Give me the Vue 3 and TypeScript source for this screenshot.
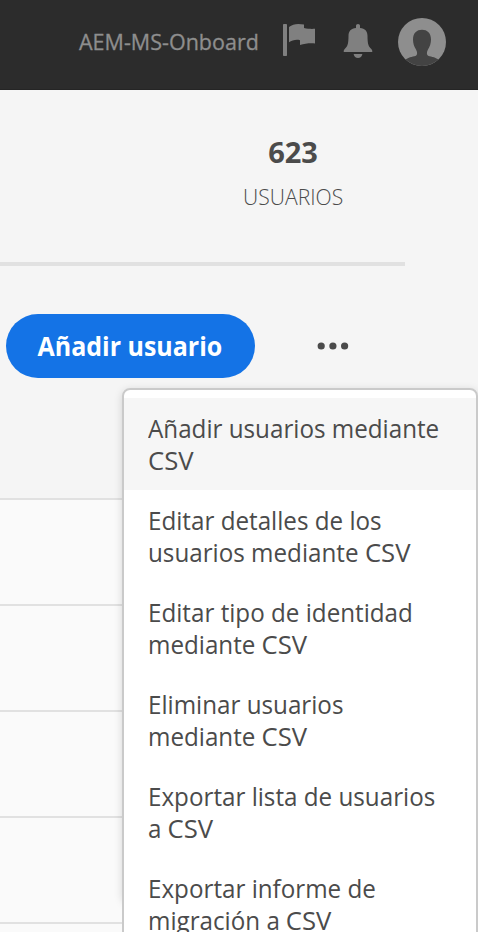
<script setup lang="ts">
interface MenuItem {
  id: string
  lines: { text: string; csv?: boolean }[]
}

const organization = 'AEM-MS-Onboard'
const userCount = 623

const menuItems: MenuItem[] = [
  { id: 'add', lines: [{ text: 'Añadir usuarios mediante' }, { text: '', csv: true }] },
  { id: 'edit', lines: [{ text: 'Editar detalles de los' }, { text: 'usuarios mediante ', csv: true }] },
  { id: 'identity', lines: [{ text: 'Editar tipo de identidad' }, { text: 'mediante ', csv: true }] },
  { id: 'remove', lines: [{ text: 'Eliminar usuarios' }, { text: 'mediante ', csv: true }] },
  { id: 'export', lines: [{ text: 'Exportar lista de usuarios' }, { text: 'a ', csv: true }] },
  { id: 'migration', lines: [{ text: 'Exportar informe de' }, { text: 'migración a ', csv: true }] },
]
</script>

<template>
  <div class="page">
    <header class="topbar">
      <span class="org"><span class="org-name">{{ organization }}</span></span>
      <svg class="flag" width="34" height="34" viewBox="0 0 34 34" aria-hidden="true">
        <rect x="1" y="1" width="4" height="32" rx="0.8" />
        <path d="M7 4C11 .8 16 .2 22 1.6V5C26 6 30 6 33 5.8V20.5C28 20 23 20.5 18 22V17.2C14 16 10 17.5 7 19.2Z" />
      </svg>
      <svg class="bell" width="30" height="36" viewBox="0 0 30 36" aria-hidden="true">
        <path d="M13 5V2.5Q13 1 15 1T17 2.5V5C22 5.6 24.5 8 24.5 13C24.5 21 25.5 23.5 28.3 26Q29.5 27.2 29.3 29H.7Q.5 27.2 1.7 26C4.5 23.5 5.5 21 5.5 13C5.5 8 8 5.6 13 5Z" />
        <path d="M10.6 31H19.4Q18.5 35 15 35T10.6 31Z" />
      </svg>
      <svg class="avatar" width="48" height="48" viewBox="0 0 48 48" aria-hidden="true">
        <circle cx="24" cy="24" r="24" fill="#8e8e8e" />
        <path d="M7.6 41.5C11 38.6 16.5 38.6 18.2 37.4C19.8 36.1 19 33.5 18 31.5C16.2 28.5 15 25.5 15 21.5C15 15 18.7 11.7 24 11.7S33 15 33 21.5C33 25.5 31.8 28.5 30 31.5C29 33.5 28.2 36.1 29.8 37.4C31.5 38.6 37 38.6 40.4 41.5A24 24 0 0 1 7.6 41.5Z" fill="#434343" />
      </svg>
    </header>

    <section class="summary">
      <div class="stat">
        <strong class="count">{{ userCount }}</strong>
        <span class="label">USUARIOS</span>
      </div>
    </section>

    <div class="toolbar">
      <button class="primary" type="button"><span class="primary-label">Añadir usuario</span></button>
      <button class="more" type="button" aria-haspopup="menu">
        <svg width="32" height="8" viewBox="0 0 32 8" aria-hidden="true">
          <circle cx="4.2" cy="4" r="3.6" />
          <circle cx="15.9" cy="4" r="3.6" />
          <circle cx="27.6" cy="4" r="3.6" />
        </svg>
      </button>
    </div>

    <div class="table">
      <div v-for="n in 5" :key="n" class="row"></div>
    </div>

    <div class="popover">
      <ul class="menu" role="menu">
        <li v-for="(item, index) in menuItems" :key="item.id" class="item" :class="{ active: index === 0 }" role="menuitem">
          <span v-for="line in item.lines" :key="line.text" class="line">{{ line.text }}<span v-if="line.csv" class="csv">CSV</span></span>
        </li>
      </ul>
    </div>
  </div>
</template>

<style>
body {
  margin: 0;
  overflow: hidden;
}
</style>

<style scoped>
.page {
  position: relative;
  height: 932px;
  overflow: hidden;
  background: #f5f5f5;
  color: #4b4b4b;
  font-family: "Open Sans", "Noto Sans", sans-serif;
}
.topbar {
  display: flex;
  align-items: center;
  box-sizing: border-box;
  height: 90px;
  padding: 0 32px 5px 79px;
  background: #2c2c2c;
  border-bottom: 1px solid #252525;
  color: #8e8e8e;
  fill: #808080;
}
.org {
  flex: none;
  width: 203px;
  margin-top: -2px;
  font-size: 22px;
  line-height: 32px;
  white-space: nowrap;
}
.org-name {
  display: inline-block;
  -webkit-text-stroke: 0.3px currentColor;
  transform: scaleX(0.978);
  transform-origin: left;
}
.flag {
  flex: none;
  margin-top: -4px;
}
.bell {
  flex: none;
  margin: -3px 25px 0 27px;
}
.avatar {
  flex: none;
}
.summary {
  display: flex;
  justify-content: flex-end;
  box-sizing: border-box;
  width: 405px;
  height: 176px;
  padding: 45px 50px 0 0;
  border-bottom: 4px solid #e1e1e1;
}
.stat {
  display: flex;
  flex-direction: column;
  align-items: center;
  width: 124px;
}
.count {
  font-size: 29px;
  font-weight: 700;
  line-height: 34px;
}
.label {
  margin-top: 11px;
  font-size: 22px;
  font-weight: 300;
  line-height: 32px;
  transform: scaleX(0.96);
}
.toolbar {
  display: flex;
  align-items: center;
  height: 64px;
  padding: 48px 0 0 6px;
}
button {
  padding: 0;
  border: 0;
  font-family: inherit;
}
.primary {
  display: flex;
  align-items: center;
  justify-content: center;
  box-sizing: border-box;
  width: 249px;
  height: 64px;
  padding: 0 1px 2px 0;
  border-radius: 32px;
  background: #1473e6;
  color: #fff;
  font-size: 27px;
  font-weight: 700;
  white-space: nowrap;
}
.primary-label {
  transform: scaleX(0.925);
}
.more {
  display: flex;
  margin: -1px 0 0 62px;
  background: none;
  fill: #4b4b4b;
}
.table {
  margin-top: 120px;
}
.row {
  height: 104px;
  border-top: 2px solid #e1e1e1;
  background: #fafafa;
}
.popover {
  position: absolute;
  top: 388px;
  left: 122px;
  width: 356px;
}
.popover::before {
  content: "";
  position: absolute;
  top: 0;
  left: 0;
  width: 356px;
  height: 514px;
  border-radius: 8px;
  box-shadow: 0 2px 8px rgba(0, 0, 0, 0.15);
}
.menu {
  position: relative;
  box-sizing: border-box;
  height: 580px;
  margin: 0;
  padding: 8px 0;
  border: 2px solid #cacaca;
  border-radius: 8px;
  background: #fff;
  list-style: none;
}
.item {
  height: 64px;
  padding: 14px 24px;
  font-size: 26px;
  line-height: 32px;
}
.item.active {
  background: #f6f6f6;
}
.line {
  display: block;
  white-space: nowrap;
  transform: scaleX(0.931);
  transform-origin: left;
}
.csv {
  display: inline-block;
  transform: scaleX(1.06);
  transform-origin: left;
}
</style>
